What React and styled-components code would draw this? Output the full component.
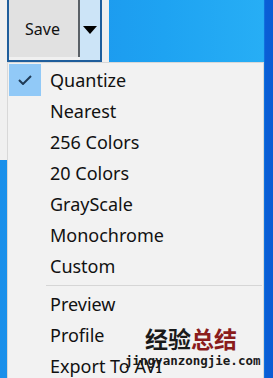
import React from 'react'
import styled, { createGlobalStyle } from 'styled-components'

const GlobalStyle = createGlobalStyle`
  html, body { margin: 0; padding: 0; }
  body { font-family: "Noto Sans", "Open Sans", sans-serif; }
`

const items = ['Quantize', 'Nearest', '256 Colors', '20 Colors', 'GrayScale', 'Monochrome', 'Custom']
const extras = ['Preview', 'Profile', 'Export To AVI']

function App() {
    return (
        <Desktop>
            <GlobalStyle />
            <Window>
                <SplitButton>
                    <SaveBtn>Save</SaveBtn>
                    <ArrowBtn><Arrow /></ArrowBtn>
                </SplitButton>
            </Window>
            <Menu>
                {items.map((label, i) => (
                    <Item key={label}>
                        <CheckCell $on={i === 0}>
                            {i === 0 && (
                                <svg width="14" height="10" viewBox="0 0 14 10">
                                    <path d="M1 5 L5 9 L13 1" fill="none" stroke="#1f3a56" strokeWidth="2" />
                                </svg>
                            )}
                        </CheckCell>
                        <Label>{label}</Label>
                    </Item>
                ))}
                <Separator />
                {extras.map(label => (
                    <Item key={label}>
                        <CheckCell />
                        <Label>{label}</Label>
                    </Item>
                ))}
            </Menu>
            <Watermark>
                <Cn>经验<Red>总结</Red></Cn>
                <Url>jingyanzongjie.com</Url>
            </Watermark>
        </Desktop>
    )
}

const Desktop = styled.div`
    position: relative;
    width: 273px;
    height: 378px;
    overflow: hidden;
    background: linear-gradient(90deg, #1a8fea 0%, #1ea3f2 60%, #27aef5 96.5%, #0a5fd6 97%, #0a5cd4 100%);
`

const Window = styled.div`
    position: absolute;
    top: 0;
    left: 0;
    width: 109px;
    height: 160px;
    background: #f0f0f0;
    box-sizing: border-box;
    padding-left: 7px;
`

const SplitButton = styled.div`
    display: flex;
    width: 95px;
    height: 62px;
    box-sizing: border-box;
    border: 2px solid #1f5e9c;
    border-top: none;
`

const SaveBtn = styled.div`
    flex: 1;
    display: flex;
    align-items: center;
    justify-content: center;
    background: #e1e1e1;
    border-right: 2px solid #5a6066;
    margin-bottom: 3px;
    font-size: 16px;
    color: #111;
    padding-right: 2px;
`

const ArrowBtn = styled.div`
    width: 20px;
    display: flex;
    align-items: center;
    justify-content: center;
    background: #cce4f7;
`

const Arrow = styled.div`
    width: 0;
    height: 0;
    border-left: 7px solid transparent;
    border-right: 7px solid transparent;
    border-top: 8px solid #000;
`

const Menu = styled.div`
    position: absolute;
    top: 62px;
    left: 7px;
    width: 257px;
    height: 330px;
    box-sizing: border-box;
    background: #f2f2f2;
    border: 1px solid #d8d8d8;
    padding-top: 1px;
    display: flex;
    flex-direction: column;
`

const Item = styled.div`
    display: flex;
    align-items: center;
    height: 31px;
`

const CheckCell = styled.div`
    width: 32px;
    height: 32px;
    margin-left: 1px;
    display: flex;
    align-items: center;
    justify-content: center;
    background: ${p => (p.$on ? '#91c9f7' : 'transparent')};
`

const Label = styled.span`
    margin-left: 9px;
    font-size: 18px;
    color: #111;
    white-space: nowrap;
`

const Separator = styled.div`
    height: 1px;
    margin: 4px 1px 2px 38px;
    background: #d6d6d6;
`

const Watermark = styled.div`
    position: absolute;
    left: 125px;
    top: 324px;
    display: flex;
    flex-direction: column;
    align-items: flex-start;
`

const Cn = styled.div`
    margin-left: 20px;
    font-family: "Noto Sans CJK SC", sans-serif;
    font-weight: 700;
    font-size: 23px;
    line-height: 28px;
    color: #1a1a1a;
`

const Red = styled.span`
    color: #8a1c1c;
`

const Url = styled.div`
    font-family: "DejaVu Sans Mono", monospace;
    font-weight: 700;
    font-size: 12.5px;
    line-height: 18px;
    color: #1a1a1a;
`

export default App
